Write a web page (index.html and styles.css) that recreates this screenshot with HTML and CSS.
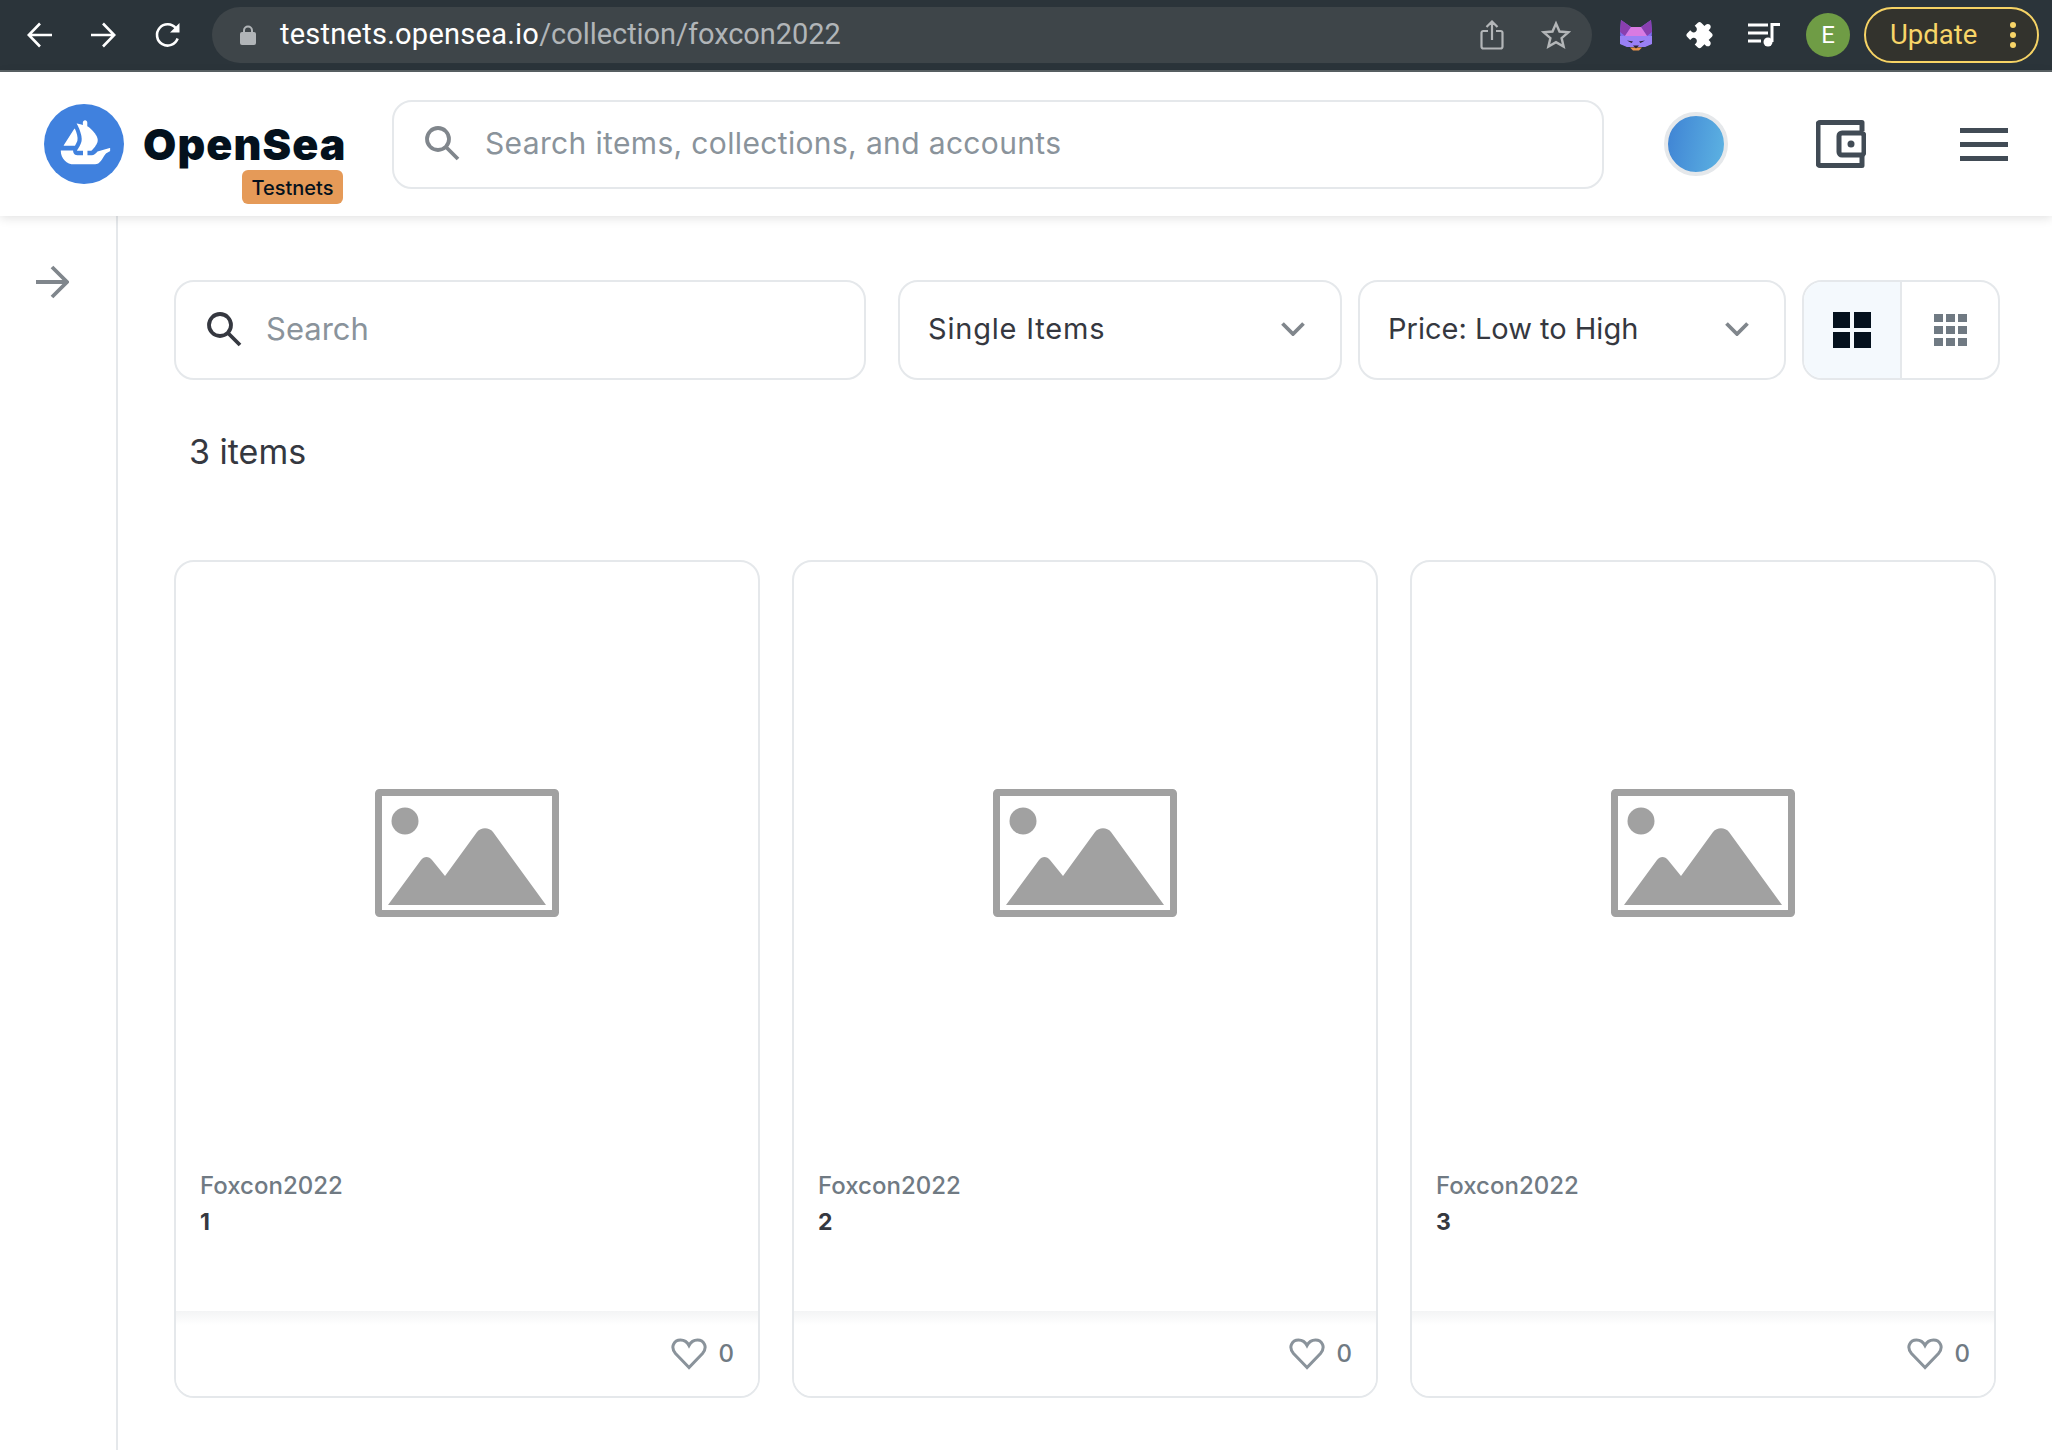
FILE: index.html
```html
<!DOCTYPE html>
<html lang="en">
<head>
  <meta charset="UTF-8">
  <meta name="viewport" content="width=device-width, initial-scale=1.0">
  <title>Foxcon2022 - OpenSea</title>
  <link rel="stylesheet" href="styles.css">
</head>
<body>
  <!-- browser toolbar -->
  <div class="browser-bar">
    <div class="nav-icons">
      <svg width="26" height="26" viewBox="0 0 26 26" fill="none" stroke="#fff" stroke-width="2.6"><path d="M25 13H2M13 1.5 1.8 13 13 24.5"/></svg>
      <svg width="26" height="26" viewBox="0 0 26 26" fill="none" stroke="#fff" stroke-width="2.6"><path d="M1 13h23M13 1.5 24.2 13 13 24.5"/></svg>
      <svg class="reload-icon" width="28" height="28" viewBox="0 0 28 28" fill="none"><path d="M23.6 17.5a10.6 10.6 0 1 1-1.7-10.2" stroke="#fff" stroke-width="2.6"/><path d="M25.5 2v9.5H16z" fill="#fff"/></svg>
    </div>
    <div class="url-pill">
      <svg width="16" height="20" viewBox="0 0 16 20"><path d="M4 8V5.5a4 4 0 0 1 8 0V8" fill="none" stroke="#b1b5b8" stroke-width="2"/><rect y="7" width="16" height="13" rx="2" fill="#b1b5b8"/></svg>
      <div class="url-text">testnets.opensea.io<span class="url-path">/collection/foxcon2022</span></div>
      <svg class="share-icon" width="24" height="30" viewBox="0 0 24 30" fill="none" stroke="#b3b6b8" stroke-width="2.2"><path d="M8 11H3.5A1.8 1.8 0 0 0 1.5 13v13.5a2 2 0 0 0 2 2h17a2 2 0 0 0 2-2V13a1.8 1.8 0 0 0-2-2H16M12 20V2M6.5 7 12 1.5 17.500 7"/></svg>
      <svg class="star-icon" width="30" height="30" viewBox="0 0 30 30" fill="none" stroke="#b3b6b8" stroke-width="2.4"><path d="m15 3.500 3.500 8 8.700.8-6.600 5.800 2 8.500-7.600-4.500-7.600 4.500 2-8.500-6.600-5.800 8.700-.8z"/></svg>
    </div>
    <svg class="fox-icon" width="32" height="32" viewBox="0 0 32 32">
      <path d="M1 1 11 8h10L31 1l1 12-1 12-7 3-4-1h-8l-4 1-7-3-1-12z" fill="#7f6cf0"/>
      <path d="M1 1 11 8 5 17 0 13z" fill="#8a3fb0"/>
      <path d="M31 1 21 8l6 9 5-4z" fill="#8a3fb0"/>
      <path d="M11 8h10l6 9H5z" fill="#d97ae2"/>
      <path d="M0 17h32v8l-7 3H7l-7-3z" fill="#9a80f5"/>
      <path d="M7 21.500l6 1-1.500 1.500zM25 21.500l-6 1 1.500 1.500z" fill="#2a2030"/>
      <path d="M10 28.500h12l-3 3h-6z" fill="#e8924b"/>
      <path d="M13 26.500h6l-3 3z" fill="#2a2030"/>
    </svg>
    <svg class="puzzle-icon" width="32" height="32" viewBox="0 0 24 24"><path transform="rotate(45 12 12) translate(1.500 1.500) scale(.88)" fill="#fff" d="M20.500 11H19V7c0-1.100-.9-2-2-2h-4V3.500C13 2.120 11.880 1 10.500 1S8 2.120 8 3.500V5H4c-1.100 0-1.990.9-1.990 2v3.800H3.500c1.490 0 2.700 1.210 2.700 2.700s-1.210 2.700-2.700 2.700H2V20c0 1.100.9 2 2 2h3.800v-1.500c0-1.490 1.210-2.700 2.700-2.700 1.490 0 2.700 1.210 2.700 2.700V22H17c1.100 0 2-.9 2-2v-4h1.500c1.380 0 2.500-1.120 2.500-2.500S21.880 11 20.500 11z"/></svg>
    <svg class="media-icon" width="32" height="26" viewBox="0 0 32 26" fill="none" stroke="#fff" stroke-width="3"><path d="M0 3h20M0 11h20M0 19h13M24 20V2.500h8"/><circle cx="20" cy="20" r="4.500" fill="#fff" stroke="none"/></svg>
    <div class="profile-chip">E</div>
    <div class="update-pill">
      <span>Update</span>
      <div class="update-dots"><i></i><i></i><i></i></div>
    </div>
  </div>

  <!-- opensea header -->
  <header class="site-header">
    <svg class="logo-mark" width="80" height="80" viewBox="0 0 90 90">
      <circle cx="45" cy="45" r="45" fill="#4081de"/>
      <path fill="#fff" d="M22.200 46.500 34.100 27.900c.2-.3.600-.2.700 0 2 4.400 3.600 9.900 2.800 13.300-.3 1.400-1.300 3.300-2.300 5-.1.300-.3.500-.4.800-.1.100-.2.100-.3.100H22.500c-.3 0-.5-.3-.3-.6z"/>
      <path fill="#fff" d="M74.400 49.900v2.900c0 .2-.1.300-.3.400-.9.400-4 1.800-5.300 3.600-3.300 4.600-5.800 11.100-11.400 11.100H33.900C25.600 67.900 18.900 61.200 18.900 52.800v-.2c0-.2.200-.4.400-.4h13.100c.3 0 .4.200.4.500-.1.800.1 1.700.5 2.500.8 1.600 2.400 2.500 4.100 2.500h6.500v-5h-6.400c-.3 0-.5-.4-.3-.7l.2-.3c.6-.9 1.500-2.200 2.300-3.700.6-1 1.200-2.100 1.600-3.200l.2-.6c.1-.4.300-.7.300-1 .1-.3.200-.6.300-.8.200-.9.300-1.900.3-3 0-.4 0-.8-.1-1.200 0-.4-.1-.9-.1-1.300-.1-.4-.1-.8-.2-1.200-.1-.6-.2-1.200-.4-1.800l-.1-.2c-.1-.4-.2-.8-.3-1.200-.4-1.300-.8-2.500-1.200-3.600-.2-.5-.4-.9-.5-1.300-.3-.7-.6-1.300-.8-1.800l-.4-.7c-.1-.3-.2-.5-.4-.8-.1-.2-.2-.4-.3-.6l-.8-1.400c-.1-.2.1-.4.300-.4l4.900 1.300.7.200.7.200.3.100v-2.900c0-1.400 1.100-2.600 2.500-2.600.7 0 1.300.3 1.800.8s.7 1.100.7 1.800v4.300l.5.100c.1 0 .1 0 .1.100.1.100.3.200.6.400.2.100.4.300.6.500.5.400 1.100.9 1.700 1.400.2.100.3.300.5.400.8.800 1.700 1.600 2.600 2.600.2.300.5.600.7.900.2.300.5.600.7.900.3.400.6.800.9 1.200.1.200.3.400.4.600.4.500.7 1.100 1 1.600.1.300.3.500.4.800.3.700.6 1.500.8 2.200 0 .2.100.3.100.5.100.2.100.5.100.7.100.8 0 1.500-.1 2.300-.1.300-.2.600-.3 1-.1.300-.2.600-.4.900-.3.700-.6 1.300-1 1.900-.1.200-.3.500-.4.700-.2.200-.3.500-.5.700-.2.300-.4.600-.6.800-.2.300-.4.500-.6.800-.3.400-.6.700-.9 1-.2.200-.4.500-.6.700-.2.200-.4.400-.6.600-.3.300-.6.600-.8.800l-.5.400c-.1.100-.2.100-.3.100h-3.900v5h5c1.100 0 2.100-.4 3-1.100.3-.3 1.600-1.400 3.100-3 .1-.1.100-.1.200-.1l13.700-4c.3-.1.600.1.600.4z"/>
    </svg>
    <div class="brand">
      <div class="brand-name">OpenSea</div>
      <div class="brand-badge">Testnets</div>
    </div>
    <div class="header-search">
      <svg width="38" height="38" viewBox="0 0 38 38" fill="none" stroke="#80868c" stroke-width="3.800"><circle cx="15" cy="15" r="11"/><path d="m23 23 12 12"/></svg>
      <input type="text" placeholder="Search items, collections, and accounts">
    </div>
    <div class="header-avatar"></div>
    <svg class="wallet-icon" width="50" height="48" viewBox="0 0 50 48" fill="none" stroke="#414b55" stroke-width="5" stroke-linejoin="round"><path d="M46 11V2.500H4a2 2 0 0 0-2 2v39a2 2 0 0 0 2 2h42V36"/><rect x="23" y="13" width="25" height="22" rx="3" fill="#fff"/><circle cx="35" cy="24" r="3.500" fill="#414b55" stroke="none"/></svg>
    <div class="hamburger"><i></i><i></i><i></i></div>
  </header>

  <div class="layout">
    <aside class="sidebar">
      <svg width="34" height="34" viewBox="0 0 34 34" fill="none" stroke="#80868c" stroke-width="3.800"><path d="M1 17h30M17 2l15 15-15 15"/></svg>
    </aside>

    <main class="content">
      <div class="filters">
        <div class="box search-box">
          <svg width="38" height="38" viewBox="0 0 38 38" fill="none" stroke="#353840" stroke-width="3.800"><circle cx="15" cy="15" r="11"/><path d="m23 23 12 12"/></svg>
          <input type="text" placeholder="Search">
        </div>
        <div class="box select-box select-type">
          <span>Single Items</span>
          <svg width="24" height="14" viewBox="0 0 24 14" fill="none" stroke="#80868c" stroke-width="3.800"><path d="m1.500 1.500 10.500 10.500 10.500-10.500"/></svg>
        </div>
        <div class="box select-box select-sort">
          <span>Price: Low to High</span>
          <svg width="24" height="14" viewBox="0 0 24 14" fill="none" stroke="#80868c" stroke-width="3.800"><path d="m1.500 1.500 10.500 10.500 10.500-10.500"/></svg>
        </div>
        <div class="box view-toggle">
          <div class="toggle-btn active">
            <div class="grid-large"><i></i><i></i><i></i><i></i></div>
          </div>
          <div class="toggle-btn">
            <div class="grid-small"><i></i><i></i><i></i><i></i><i></i><i></i><i></i><i></i><i></i></div>
          </div>
        </div>
      </div>

      <div class="item-count">3 items</div>

      <div class="cards">
        <div class="card">
          <div class="card-image">
            <svg width="184" height="128" viewBox="0 0 184 128"><rect x="3.500" y="3.500" width="177" height="121" rx="1" fill="none" stroke="#a1a1a1" stroke-width="7"/><circle cx="30" cy="32" r="13.500" fill="#a1a1a1"/><path d="M13 116 46 71c3-4 8-4 11 0l13 16 32-44c4-5 12-5 16 0l53 73z" fill="#a1a1a1"/></svg>
          </div>
          <div class="card-info">
            <div class="card-collection">Foxcon2022</div>
            <div class="card-name">1</div>
          </div>
          <div class="card-footer">
            <svg width="36" height="32" viewBox="0 0 36 32" fill="none" stroke="#8a939b" stroke-width="3"><path d="M18 29.500 4.500 15.500C-1 9 3 2 9.500 2c4 0 7 2.500 8.500 5.500C19.500 4.500 22.500 2 26.500 2 33 2 37 9 31.500 15.500z"/></svg>
            <span>0</span>
          </div>
        </div>
        <div class="card">
          <div class="card-image">
            <svg width="184" height="128" viewBox="0 0 184 128"><rect x="3.500" y="3.500" width="177" height="121" rx="1" fill="none" stroke="#a1a1a1" stroke-width="7"/><circle cx="30" cy="32" r="13.500" fill="#a1a1a1"/><path d="M13 116 46 71c3-4 8-4 11 0l13 16 32-44c4-5 12-5 16 0l53 73z" fill="#a1a1a1"/></svg>
          </div>
          <div class="card-info">
            <div class="card-collection">Foxcon2022</div>
            <div class="card-name">2</div>
          </div>
          <div class="card-footer">
            <svg width="36" height="32" viewBox="0 0 36 32" fill="none" stroke="#8a939b" stroke-width="3"><path d="M18 29.500 4.500 15.500C-1 9 3 2 9.500 2c4 0 7 2.500 8.500 5.500C19.500 4.500 22.500 2 26.500 2 33 2 37 9 31.500 15.500z"/></svg>
            <span>0</span>
          </div>
        </div>
        <div class="card">
          <div class="card-image">
            <svg width="184" height="128" viewBox="0 0 184 128"><rect x="3.500" y="3.500" width="177" height="121" rx="1" fill="none" stroke="#a1a1a1" stroke-width="7"/><circle cx="30" cy="32" r="13.500" fill="#a1a1a1"/><path d="M13 116 46 71c3-4 8-4 11 0l13 16 32-44c4-5 12-5 16 0l53 73z" fill="#a1a1a1"/></svg>
          </div>
          <div class="card-info">
            <div class="card-collection">Foxcon2022</div>
            <div class="card-name">3</div>
          </div>
          <div class="card-footer">
            <svg width="36" height="32" viewBox="0 0 36 32" fill="none" stroke="#8a939b" stroke-width="3"><path d="M18 29.500 4.500 15.500C-1 9 3 2 9.500 2c4 0 7 2.500 8.500 5.500C19.500 4.500 22.500 2 26.500 2 33 2 37 9 31.500 15.500z"/></svg>
            <span>0</span>
          </div>
        </div>
      </div>
    </main>
  </div>
</body>
</html>
```

FILE: styles.css
```css
* {
  box-sizing: border-box;
}
body {
  margin: 0;
  height: 1450px;
  overflow: hidden;
  background: #fff;
  font-family: 'Inter', sans-serif;
  color: #353840;
}
input {
  flex: 1;
  min-width: 0;
  border: none;
  outline: none;
  padding: 0;
  background: none;
  font-family: 'Inter', sans-serif;
  color: #353840;
}
input::placeholder {
  color: #8a939b;
  opacity: 1;
}

/* browser toolbar */
.browser-bar {
  height: 72px;
  display: flex;
  align-items: center;
  background: #2b343a;
  border-bottom: 2px solid #5a6265;
  padding-bottom: 1px;
}
.nav-icons {
  width: 212px;
  padding-left: 27px;
  display: flex;
  align-items: center;
  gap: 37px;
}
.reload-icon {
  margin-left: 1px;
}
.url-pill {
  width: 1380px;
  height: 56px;
  display: flex;
  align-items: center;
  padding-left: 28px;
  background: #3e4549;
  border-radius: 28px;
}
.url-text {
  margin-left: 24px;
  margin-top: -2px;
  flex: 1;
  font-family: 'Roboto', sans-serif;
  font-size: 29px;
  letter-spacing: 0.25px;
  color: #fff;
}
.url-path {
  letter-spacing: -0.05px;
  color: #b1b5b8;
}
.star-icon {
  margin: 0 21px 0 37px;
}
.fox-icon {
  margin-left: 28px;
}
.puzzle-icon {
  margin-left: 34px;
}
.media-icon {
  margin-left: 30px;
}
.profile-chip {
  width: 44px;
  height: 44px;
  margin-left: 26px;
  border-radius: 50%;
  background: #6f9c45;
  color: #fff;
  font-family: 'Roboto', sans-serif;
  font-size: 24px;
  display: flex;
  align-items: center;
  justify-content: center;
}
.update-pill {
  width: 175px;
  height: 56px;
  margin-left: 14px;
  padding: 0 21px 0 24px;
  display: flex;
  align-items: center;
  justify-content: space-between;
  border: 2px solid #f6d365;
  border-radius: 28px;
  background: #33332d;
  color: #f8d568;
  font-family: 'Roboto', sans-serif;
  font-size: 27.500px;
}
.update-dots {
  display: flex;
  flex-direction: column;
  gap: 4px;
}
.update-dots i {
  width: 6px;
  height: 6px;
  border-radius: 50%;
  background: #f8d568;
}

/* opensea header */
.site-header {
  height: 144px;
  display: flex;
  align-items: center;
  padding-left: 44px;
  background: #fff;
  box-shadow: 0 2px 10px rgba(0, 0, 0, 0.12);
  position: relative;
}
.brand {
  width: 200px;
  margin-left: 19px;
  align-self: flex-start;
  display: flex;
  flex-direction: column;
  align-items: flex-end;
  padding-top: 47px;
}
.brand-name {
  width: 100%;
  font-size: 43px;
  font-weight: 900;
  letter-spacing: 1.1px;
  line-height: 50px;
  color: #04111d;
  white-space: nowrap;
}
.brand-badge {
  width: 101px;
  height: 34px;
  margin-top: 1px;
  border-radius: 6px;
  background: #e59a58;
  color: #04111d;
  font-size: 20px;
  font-weight: 500;
  line-height: 36px;
  text-align: center;
}
.header-search {
  width: 1212px;
  height: 89px;
  margin-left: 49px;
  padding: 0 20px 3px 29px;
  display: flex;
  align-items: center;
  gap: 24px;
  border: 2px solid #e5e8eb;
  border-radius: 20px;
}
.header-search input {
  font-size: 30px;
  letter-spacing: 0.35px;
}
.header-avatar {
  width: 64px;
  height: 64px;
  margin-left: 60px;
  border-radius: 50%;
  border: 4px solid #e5e8eb;
  background: linear-gradient(100deg, #3f83d4, #5db3e2);
}
.wallet-icon {
  margin-left: 88px;
}
.hamburger {
  width: 48px;
  margin-left: 94px;
  display: flex;
  flex-direction: column;
  gap: 9px;
}
.hamburger i {
  height: 5px;
  background: #414b55;
}

/* page body */
.layout {
  display: flex;
  height: 1234px;
}
.sidebar {
  width: 118px;
  flex-shrink: 0;
  padding: 49px 0 0 35px;
  border-right: 2px solid #e5e8eb;
}
.content {
  flex: 1;
  padding: 64px 0 0 56px;
}
.filters {
  display: flex;
  height: 100px;
}
.box {
  height: 100px;
  display: flex;
  align-items: center;
  border: 2px solid #e5e8eb;
  border-radius: 20px;
  background: #fff;
}
.search-box {
  width: 692px;
  padding: 0 20px 3px 29px;
  gap: 23px;
}
.search-box input {
  font-size: 31px;
}
.select-box {
  justify-content: space-between;
  padding: 0 35px 3px 28px;
  font-size: 29px;
}
.select-type {
  width: 444px;
  margin-left: 32px;
  letter-spacing: 0.8px;
}
.select-sort {
  width: 428px;
  margin-left: 16px;
}
.view-toggle {
  width: 198px;
  margin-left: 16px;
  overflow: hidden;
}
.toggle-btn {
  flex: 1;
  height: 100%;
  display: flex;
  align-items: center;
  justify-content: center;
}
.toggle-btn.active {
  background: #f4f9fd;
  border-right: 2px solid #e5e8eb;
}
.grid-large {
  display: grid;
  grid-template-columns: 17px 17px;
  grid-template-rows: 16px 16px;
  gap: 4px;
}
.grid-large i {
  background: #04111d;
}
.grid-small {
  display: grid;
  grid-template-columns: repeat(3, 9px);
  grid-template-rows: repeat(3, 8px);
  gap: 4px 3px;
}
.grid-small i {
  background: #707a83;
}
.item-count {
  margin: 50px 0 0 15px;
  height: 130px;
  font-size: 34px;
  line-height: 44px;
}

/* cards */
.cards {
  display: grid;
  grid-template-columns: repeat(3, 586px);
  gap: 32px;
}
.card {
  height: 838px;
  display: flex;
  flex-direction: column;
  border: 2px solid #e5e8eb;
  border-radius: 20px;
  overflow: hidden;
}
.card-image {
  height: 581px;
  flex-shrink: 0;
  display: flex;
  align-items: center;
  justify-content: center;
}
.card-info {
  height: 168px;
  flex-shrink: 0;
  padding: 25px 24px 0 24px;
}
.card-collection {
  font-size: 24px;
  line-height: 36px;
  font-weight: 500;
  color: #707a83;
}
.card-name {
  font-size: 23px;
  line-height: 36px;
  font-weight: 700;
  color: #353840;
}
.card-footer {
  flex: 1;
  display: flex;
  align-items: center;
  justify-content: flex-end;
  gap: 12px;
  padding-right: 24px;
  background: linear-gradient(to bottom, #f3f4f5, #fff 14px);
  color: #707a83;
  font-size: 24px;
  font-weight: 500;
}
```
